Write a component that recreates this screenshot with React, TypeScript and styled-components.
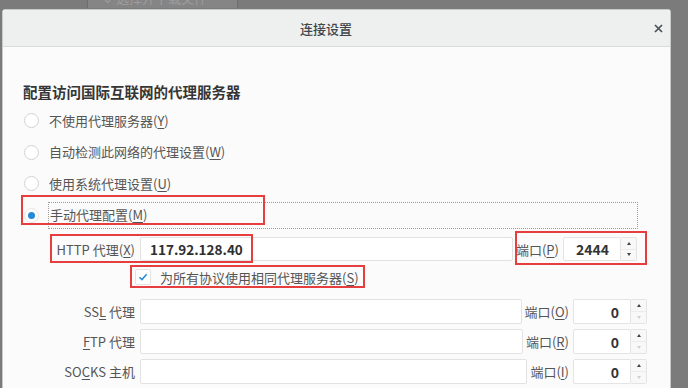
import React from 'react'
import styled, { createGlobalStyle } from 'styled-components'

const GlobalStyle = createGlobalStyle`
  html, body {
    margin: 0;
    padding: 0;
  }
  body {
    background: #7b7b7b;
    font-family: 'Noto Sans CJK SC', 'Noto Sans', sans-serif;
    color: #505050;
  }
`

const Page = styled.div`
  position: relative;
  width: 688px;
  height: 388px;
  overflow: hidden;
  background: #7b7b7b;
`

// window behind the dialog, only its bottom edge shows
const BackTab = styled.div`
  margin-left: 87px;
  width: 151px;
  height: 8px;
  overflow: hidden;
  box-sizing: border-box;
  background: #858585;
  border-left: 1px solid #6e6e6e;
  border-right: 1px solid #6e6e6e;
`
const BackTabText = styled.div`
  margin-top: -10px;
  padding-left: 14px;
  font-size: 13px;
  line-height: 16px;
  color: #9d9d9d;
  white-space: nowrap;
`

const Dialog = styled.div`
  margin: 1px 0 0 2px;
  width: 669px;
  height: 400px;
  box-sizing: border-box;
  background: #fbfbfb;
  border: 1px solid #c9c9c9;
  border-radius: 3px 3px 0 0;
`

const TitleBar = styled.div`
  display: flex;
  align-items: center;
  height: 36px;
  padding-right: 3px;
  background: #eef0ef;
  border-bottom: 1px solid #d9dbda;
`
const Title = styled.div`
  flex: 1;
  text-align: center;
  font-size: 13px;
  font-weight: 500;
  color: #40464b;
`
const CloseButton = styled.button`
  width: 18px;
  height: 18px;
  padding: 0;
  border: 0;
  background: none;
  display: flex;
  align-items: center;
  justify-content: center;
  color: #4a5158;
`

const Body = styled.div`
  padding: 35px 0 0 20px;
`
const Heading = styled.div`
  font-size: 14.5px;
  font-weight: 700;
  line-height: 20px;
  color: #353535;
  margin-bottom: 3px;
`

const RadioRow = styled.div`
  display: flex;
  align-items: center;
  height: 31.5px;
  padding-left: 1px;
`
const Radio = styled.span<{ $checked?: boolean }>`
  position: relative;
  flex: none;
  width: 15px;
  height: 15px;
  box-sizing: border-box;
  border-radius: 50%;
  border: 1px solid ${({ $checked }) => ($checked ? '#e6e6e6' : '#d2d2d2')};
  background: #fff;
  margin-right: 9px;
  &::after {
    content: '';
    display: ${({ $checked }) => ($checked ? 'block' : 'none')};
    position: absolute;
    left: 3px;
    top: 3px;
    width: 7px;
    height: 7px;
    border-radius: 50%;
    background: #238ad8;
  }
`
const RadioLabel = styled.span<{ $focused?: boolean }>`
  font-size: 13px;
  line-height: 18px;
  color: #555;
  padding-left: 1px;
  ${({ $focused }) =>
    $focused &&
    `
    flex: 1;
    display: flex;
    align-items: center;
    height: 27px;
    box-sizing: border-box;
    margin-right: 32px;
    border: 1px dotted #9c9c9c;
  `}
`
const Key = styled.span`
  text-decoration: underline;
  text-underline-offset: 2px;
`

const FieldRow = styled.div<{ $top: number; $right: number; $h: number }>`
  display: flex;
  align-items: stretch;
  height: ${({ $h }) => $h}px;
  margin: ${({ $top, $right }) => `${$top}px ${$right}px 0 32px`};
`
const FieldLabel = styled.label`
  width: 80px;
  flex: none;
  display: flex;
  align-items: center;
  justify-content: flex-end;
  font-size: 13px;
  color: #555;
  white-space: pre;
`
const TextBox = styled.div`
  flex: 1;
  margin-left: 5px;
  display: flex;
  align-items: center;
  padding-left: 9px;
  box-sizing: border-box;
  background: #fff;
  border: 1px solid #e2e2e2;
  border-radius: 2px;
  font-size: 13.5px;
  font-weight: 600;
  color: #2e2e2e;
`
const PortLabel = styled.label`
  display: flex;
  align-items: center;
  margin: 0 4px 0 3px;
  font-size: 13px;
  color: #555;
  white-space: nowrap;
`
const Spin = styled.div`
  display: flex;
  width: 74px;
  flex: none;
`
const SpinValue = styled.div`
  flex: 1;
  display: flex;
  align-items: center;
  justify-content: flex-end;
  padding-right: 11px;
  box-sizing: border-box;
  background: #fff;
  border: 1px solid #e4e4e4;
  border-radius: 2px;
  font-size: 14px;
  font-weight: 600;
  color: #333;
`
const SpinButtons = styled.div`
  width: 16px;
  display: flex;
  flex-direction: column;
  box-sizing: border-box;
  background: #f8f8f8;
  border: 1px solid #e4e4e4;
  border-left: 0;
  border-radius: 0 2px 2px 0;
`
const SpinArrow = styled.div<{ $down?: boolean; $off?: boolean }>`
  flex: 1;
  display: flex;
  align-items: center;
  justify-content: center;
  & + & {
    border-top: 1px solid #ececec;
  }
  &::after {
    content: '';
    border-left: 2.5px solid transparent;
    border-right: 2.5px solid transparent;
    ${({ $down, $off }) =>
      `${$down ? 'border-top' : 'border-bottom'}: 3px solid ${$off ? '#cfcfcf' : '#444'};`}
  }
`

const CheckRow = styled.div`
  display: flex;
  align-items: center;
  height: 24px;
  margin-top: 4px;
  padding-left: 112px;
`
const CheckBox = styled.span`
  width: 16px;
  height: 16px;
  box-sizing: border-box;
  display: flex;
  align-items: center;
  justify-content: center;
  background: #fff;
  border: 1px solid #e2e2e2;
  border-radius: 2px;
  margin-right: 9px;
  color: #238ad8;
`
const CheckLabel = styled.span`
  font-size: 13px;
  color: #555;
`

// red annotation boxes drawn over the screenshot
const Mark = styled.div<{ $x: number; $y: number; $w: number; $h: number }>`
  position: absolute;
  left: ${({ $x }) => $x}px;
  top: ${({ $y }) => $y}px;
  width: ${({ $w }) => $w}px;
  height: ${({ $h }) => $h}px;
  box-sizing: border-box;
  border: 2px solid #e63d3f;
  pointer-events: none;
`

const radios = [
  { text: '不使用代理服务器', key: 'Y' },
  { text: '自动检测此网络的代理设置', key: 'W' },
  { text: '使用系统代理设置', key: 'U' },
]

const proxies = [
  { pre: 'SS', key: 'L', post: ' 代理', port: 'O' },
  { pre: '', key: 'F', post: 'TP 代理', port: 'R' },
  { pre: 'SO', key: 'C', post: 'KS 主机', port: 'I' },
]

function SpinBox({ value, atMin }: { value: string; atMin?: boolean }) {
  return (
    <Spin>
      <SpinValue>{value}</SpinValue>
      <SpinButtons>
        <SpinArrow />
        <SpinArrow $down $off={atMin} />
      </SpinButtons>
    </Spin>
  )
}

export default function App() {
  return (
    <Page>
      <GlobalStyle />
      <BackTab>
        <BackTabText>⌄ 选择并下载文件</BackTabText>
      </BackTab>
      <Dialog>
        <TitleBar>
          <Title>连接设置</Title>
          <CloseButton>
            <svg width="9" height="9" viewBox="0 0 9 9">
              <path d="M1 1L8 8M8 1L1 8" stroke="currentColor" strokeWidth="1.7" />
            </svg>
          </CloseButton>
        </TitleBar>
        <Body>
          <Heading>配置访问国际互联网的代理服务器</Heading>
          {radios.map((r) => (
            <RadioRow key={r.key}>
              <Radio />
              <RadioLabel>
                {r.text}(<Key>{r.key}</Key>)
              </RadioLabel>
            </RadioRow>
          ))}
          <RadioRow>
            <Radio $checked />
            <RadioLabel $focused>
              手动代理配置(<Key>M</Key>)
            </RadioLabel>
          </RadioRow>

          <FieldRow $top={6} $right={33} $h={24}>
            <FieldLabel>
              HTTP 代理(<Key>X</Key>)
            </FieldLabel>
            <TextBox>117.92.128.40</TextBox>
            <PortLabel>
              端口(<Key>P</Key>)
            </PortLabel>
            <SpinBox value="2444" />
          </FieldRow>

          <CheckRow>
            <CheckBox>
              <svg width="10" height="10" viewBox="0 0 10 10">
                <path d="M1.5 5.2L4 7.6L8.6 2.2" fill="none" stroke="currentColor" strokeWidth="1.5" />
              </svg>
            </CheckBox>
            <CheckLabel>
              为所有协议使用相同代理服务器(<Key>S</Key>)
            </CheckLabel>
          </CheckRow>

          {proxies.map((p, i) => (
            <FieldRow key={p.port} $top={i === 0 ? 10 : 5} $right={23} $h={25}>
              <FieldLabel>
                {p.pre}
                <Key>{p.key}</Key>
                {p.post}
              </FieldLabel>
              <TextBox />
              <PortLabel>
                端口(<Key>{p.port}</Key>)
              </PortLabel>
              <SpinBox value="0" atMin />
            </FieldRow>
          ))}
        </Body>
      </Dialog>

      <Mark $x={21} $y={195} $w={244} $h={30} />
      <Mark $x={50} $y={234} $w={203} $h={29} />
      <Mark $x={515} $y={231} $w={132} $h={34} />
      <Mark $x={130} $y={265} $w={235} $h={23} />
    </Page>
  )
}
